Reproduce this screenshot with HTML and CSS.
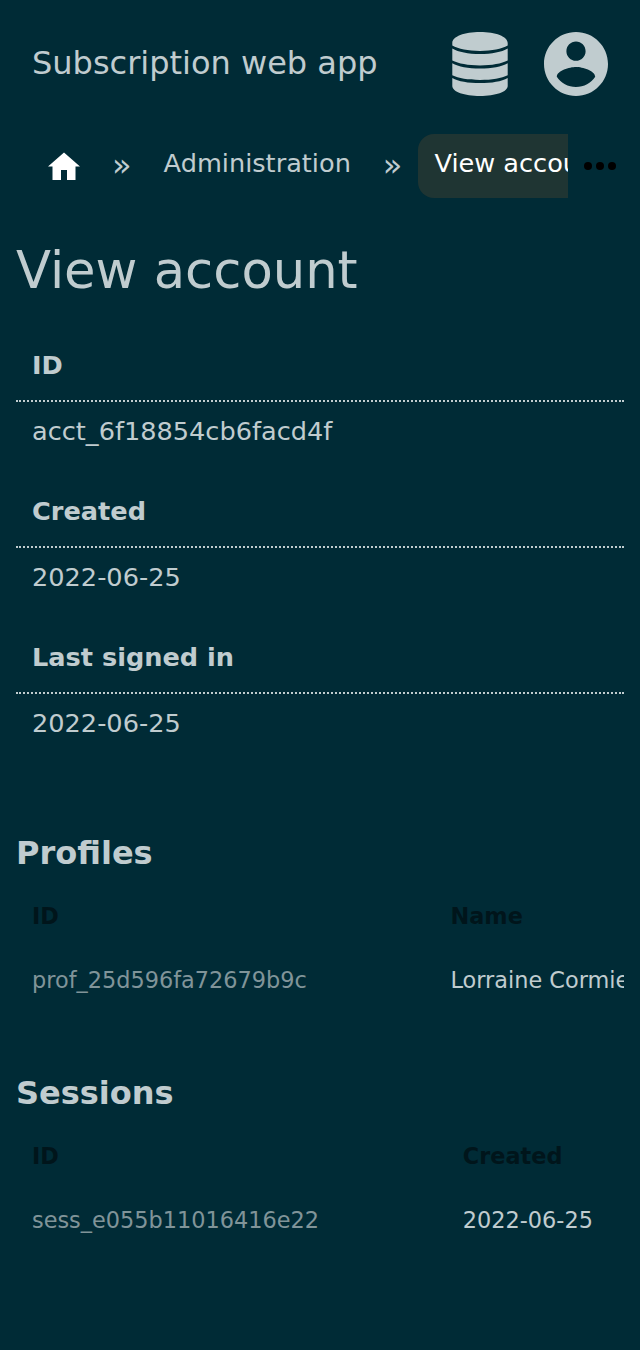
FILE: index.html
```html
<!DOCTYPE html>
<html lang="en">
<head>
<meta charset="utf-8">
<title>View account</title>
<link rel="stylesheet" href="styles.css">
</head>
<body>
<header class="app-bar">
  <span class="app-title">Subscription web app</span>
  <nav class="app-actions">
    <svg class="app-icon" viewBox="0 0 64 64" aria-label="Database"><path d="M4.300 11C4.300 4.500 16.500 0 32 0s27.700 4.500 27.700 11v2.500C53.500 17 44 18.900 32 18.900S10.500 17 4.300 13.500zM4.300 16.500C10.500 20.100 20 22 32 22s21.500-1.900 27.700-5.500v12C53.500 31.600 44 33.400 32 33.400S10.500 31.600 4.300 28.500zM4.300 31.200C10.500 34.600 20 36.500 32 36.500s21.500-1.900 27.700-5.300v12.100C53.500 46.300 44 48 32 48S10.500 46.300 4.300 43.300zM4.300 45.900C10.500 49.300 20 51.100 32 51.100s21.500-1.800 27.700-5.200V54C59.700 59.800 47.500 64 32 64S4.300 59.800 4.300 54z"/></svg>
    <svg class="app-icon" viewBox="2 2 20 20" aria-label="Account"><path d="M12 2C6.480 2 2 6.480 2 12s4.480 10 10 10 10-4.480 10-10S17.520 2 12 2zm0 3c1.660 0 3 1.340 3 3s-1.340 3-3 3-3-1.340-3-3 1.340-3 3-3zm0 14.200c-2.500 0-4.710-1.280-6-3.220.030-1.990 4-3.080 6-3.080 1.990 0 5.970 1.090 6 3.080-1.290 1.940-3.500 3.220-6 3.220z"/></svg>
  </nav>
</header>
<nav class="crumbs">
  <div class="crumb-list">
    <a class="crumb home"><svg class="home-icon" viewBox="0 0 32 32"><path d="M16 2.500 32 16.500H27.500V30H19V20H13V30H4.500V16.500H0z"/></svg></a>
    <span class="sep">»</span>
    <a class="crumb">Administration</a>
    <span class="sep">»</span>
    <a class="crumb current">View account</a>
  </div>
  <div class="more"><svg class="more-icon" viewBox="0 0 32 32"><circle cx="4" cy="16" r="4"/><circle cx="16" cy="16" r="4"/><circle cx="28" cy="16" r="4"/></svg></div>
</nav>
<main class="page">
  <h1 class="title">View account</h1>
  <dl class="facts">
    <dt>ID</dt><dd>acct_6f18854cb6facd4f</dd>
    <dt>Created</dt><dd>2022-06-25</dd>
    <dt>Last signed in</dt><dd>2022-06-25</dd>
  </dl>
  <section class="group">
    <h2>Profiles</h2>
    <div class="grid profiles">
      <b>ID</b><b>Name</b>
      <span class="id">prof_25d596fa72679b9c</span><span>Lorraine Cormier</span>
    </div>
  </section>
  <section class="group">
    <h2>Sessions</h2>
    <div class="grid sessions">
      <b>ID</b><b>Created</b>
      <span class="id">sess_e055b11016416e22</span><span>2022-06-25</span>
    </div>
  </section>
</main>
</body>
</html>
```
FILE: styles.css
```css
* { box-sizing: border-box; }
body { margin: 0; background: #002b36; color: #c0cccf; font: 25.6px/32px "DejaVu Sans", sans-serif; }
.app-bar { height: 128px; padding: 0 32px; display: flex; align-items: center; justify-content: space-between; }
.app-title { font-size: 32px; padding-bottom: 2px; }
.app-actions { display: flex; gap: 32px; }
.app-icon { width: 64px; height: 64px; fill: #c0cccf; }
.crumbs { display: flex; height: 80px; padding-left: 32px; }
.crumb-list { width: 536px; height: 80px; display: flex; align-items: flex-start; overflow: hidden; white-space: nowrap; padding-top: 6px; }
.crumb { height: 64px; padding: 13px 16px; flex: none; }
.home { padding-top: 16px; }
.home-icon { display: block; width: 32px; height: 32px; fill: #fff; }
.sep { flex: none; font-size: 32px; padding: 15px 16px 0; }
.current { background: #1f3533; color: #fff; border-radius: 16px; }
.more { flex: none; padding: 22px 0 0 16px; }
.more-icon { display: block; width: 32px; height: 32px; fill: #000; }
.page { padding: 0 16px; }
.title { margin: 30px 0 0; font-size: 51.2px; line-height: 64px; font-weight: 400; }
.facts { margin: 32px 0 0; }
.facts dt { height: 68px; padding: 15px 16px; font-weight: 700; border-bottom: 2px dotted #c0cccf; }
.facts dd { height: 78px; margin: 0; padding: 13px 16px; }
.group { height: 240px; padding-top: 61px; overflow: hidden; }
.group h2 { margin: 0; font-size: 32px; line-height: 40px; }
.grid { display: grid; font-size: 22.4px; line-height: 32px; row-gap: 32px; padding: 27px 0 0 16px; white-space: nowrap; }
.profiles { grid-template-columns: 418.500px 1fr; }
.sessions { grid-template-columns: 430.800px 1fr; }
.grid b { color: #00151b; }
.id { color: #809499; }
```
